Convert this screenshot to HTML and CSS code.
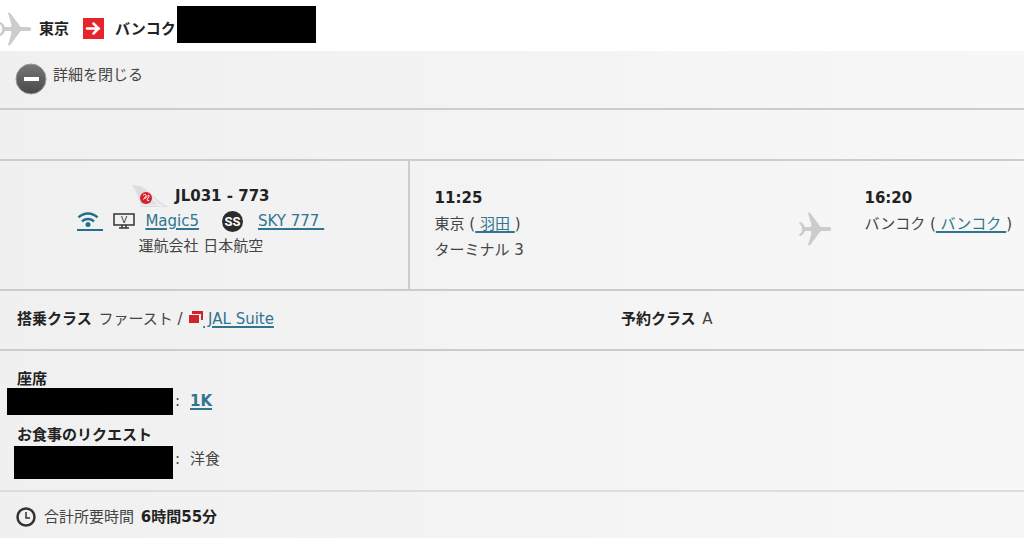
FILE: index.html
```html
<!DOCTYPE html>
<html lang="ja">
<head>
    <meta charset="UTF-8">
    <meta name="viewport" content="width=device-width, initial-scale=1.0">
    <title>東京 - バンコク</title>
    <link rel="stylesheet" href="styles.css">
</head>
<body>
    <svg class="defs" width="0" height="0">
        <symbol id="plane" viewBox="0 0 34 34">
            <path d="M10 1c1-1 2 0 3 1l8.500 11.500L23 15h8c3 0 3 4 0 4h-8l-1.500 1.500L13 32c-1 1-2 2-3 1l3.500-12-.5-2H7c-1 2-2 4-4.500 5-1 0-2-1-1-2 2-1 2.500-3 2.500-5s-.5-4-2.500-5c-1-1 0-2 1-2C5 11 6 13 7 15h6l.5-2z"/>
        </symbol>
    </svg>
    <header class="route">
        <svg class="plane"><use href="#plane"/></svg>
        <h1 class="city">東京</h1>
        <svg class="arrow" viewBox="0 0 21 21">
            <rect width="21" height="21" fill="#e6242b"/>
            <path d="M4 10.500h12M10.500 5.500l5 5-5 5" fill="none" stroke="#fff" stroke-width="2.500" stroke-linecap="round"/>
        </svg>
        <h1 class="city">バンコク</h1>
        <span class="mask mask-date"></span>
    </header>
    <main class="details">
        <div class="toggle">
            <button class="close" type="button">
                <svg class="minus" viewBox="0 0 32 32">
                    <defs>
                        <linearGradient id="shade" x2="0" y2="1">
                            <stop offset="0" stop-color="#777"/>
                            <stop offset="1" stop-color="#484848"/>
                        </linearGradient>
                    </defs>
                    <circle cx="16" cy="16" r="15" fill="url(#shade)" stroke="#999"/>
                    <rect x="9" y="14" width="15" height="4" fill="#fff"/>
                </svg>
                <span>詳細を閉じる</span>
            </button>
        </div>
        <div class="blank"></div>
        <section class="flight">
            <div class="carrier">
                <div class="number">
                    <svg class="tail" viewBox="0 0 36 23">
                        <path d="M0 0l8 1c8 3 15 14 28 21H9C7 13 4 5 0 0z" fill="#dcdce3"/>
                        <path d="M18 10l12 12M21 14l6 8M8 20h23" stroke="#f5f5f8" fill="none"/>
                        <circle cx="14" cy="13" r="6" fill="#d8202a"/>
                        <path d="M11 10.500c1.500-2 4-1 2.500 1l-2 3M12.500 14l3.500-3.500c1.500-1 1.500.5 0 2.500s-1 3 1 2.500" fill="none" stroke="#fff"/>
                    </svg>
                    <strong>JL031 - 773</strong>
                </div>
                <div class="equipment">
                    <a class="wifi" href="#" aria-label="Wi-Fi">
                        <svg viewBox="0 0 22 16">
                            <path d="M1.500 5.500c5-5.500 14-5.500 19 0M5 9.500c3-3.500 9-3.500 12 0" fill="none" stroke="#24708c" stroke-width="2.500"/>
                            <circle cx="11" cy="12.500" r="2.500" fill="#24708c"/>
                        </svg>
                    </a>
                    <svg class="monitor" viewBox="0 0 22 18">
                        <path d="M1 2h20v11H1zM6 16h10M9 13v3M13 13v3" fill="none" stroke="#333" stroke-width="1.500"/>
                        <text x="11" y="11">V</text>
                    </svg>
                    <a href="#">Magic5</a>
                    <span class="seat-type">SS</span>
                    <a href="#">SKY 777&nbsp;</a>
                </div>
                <p>運航会社 日本航空</p>
            </div>
            <div class="journey">
                <div class="stop departure">
                    <strong>11:25</strong>
                    <p>東京 (<a href="#">&nbsp;羽田&nbsp;</a>)</p>
                    <p>ターミナル 3</p>
                </div>
                <svg class="plane"><use href="#plane"/></svg>
                <div class="stop">
                    <strong>16:20</strong>
                    <p>バンコク (<a href="#">&nbsp;バンコク&nbsp;</a>)</p>
                </div>
            </div>
        </section>
        <section class="cabin">
            <p><strong>搭乗クラス</strong> ファースト /
                <svg class="window" viewBox="0 0 14 13"><path d="M3 0h11v9h-2V3H3z M0 4h10v8H0z" fill="#d2232a"/></svg><a href="#">&nbsp;JAL Suite</a></p>
            <p><strong>予約クラス</strong> A</p>
        </section>
        <section class="requests">
            <h2>座席</h2>
            <div class="request">
                <span class="mask mask-seat"></span><span class="colon">:</span><a class="seat" href="#">1K</a>
            </div>
            <h2>お食事のリクエスト</h2>
            <div class="request meal">
                <span class="mask mask-meal"></span><span class="colon">:</span><span>洋食</span>
            </div>
        </section>
        <footer class="total">
            <svg class="clock" viewBox="0 0 20 20">
                <circle cx="10" cy="10" r="8.500" fill="none" stroke="#333" stroke-width="2.500"/>
                <path d="M10 5v6h4" fill="none" stroke="#333" stroke-width="1.500"/>
            </svg>
            <p>合計所要時間 <strong>6時間55分</strong></p>
        </footer>
    </main>
</body>
</html>
```
FILE: styles.css
```css
* {
    box-sizing: border-box;
    margin: 0;
    padding: 0;
}

body {
    background: #fff;
    color: #444;
    font-family: "DejaVu Sans", "Noto Sans CJK JP", sans-serif;
    font-size: 15px;
    line-height: 26px;
}

h1, h2, button {
    font-family: inherit;
    font-size: 15px;
}

strong, h1, h2 {
    color: #222;
    font-weight: bold;
}

a {
    color: #2f7590;
    text-decoration-thickness: 2px;
    text-underline-offset: 2px;
}

.defs {
    display: block;
}

.mask {
    background: #000;
}

.plane {
    flex: none;
    width: 34px;
    height: 34px;
    fill: #ccc;
}

.route {
    display: flex;
    align-items: center;
    height: 51px;
    padding-top: 6px;
}

.route .plane {
    margin: 0 7px 0 -2px;
}

.arrow {
    width: 21px;
    height: 21px;
    margin: 0 11px 0 14px;
}

.mask-date {
    width: 139px;
    height: 37px;
    margin: 0 0 8px 1px;
}

.details {
    background: linear-gradient(to right, #f0f0f0, #f7f7f7);
}

.toggle {
    height: 59px;
    padding: 12px 15px;
    border-bottom: 2px solid #ccc;
}

.close {
    display: flex;
    gap: 6px;
    border: none;
    background: none;
    color: #444;
    line-height: 24px;
    cursor: pointer;
}

.minus {
    width: 32px;
    height: 32px;
}

.blank {
    height: 51px;
    border-bottom: 2px solid #ccc;
}

.flight {
    display: flex;
    height: 130px;
    border-bottom: 2px solid #ccc;
}

.carrier {
    display: flex;
    flex-direction: column;
    align-items: center;
    width: 40%;
    padding: 22px 6px 0 0;
    border-right: 2px solid #ccc;
}

.number, .equipment {
    display: flex;
    align-items: center;
}

.number {
    gap: 7px;
}

.tail {
    width: 36px;
    height: 23px;
}

.equipment {
    gap: 10px;
    height: 24px;
}

.wifi {
    display: flex;
    width: 26px;
    height: 19px;
    border-bottom: 2px solid #24708c;
}

.wifi svg {
    width: 22px;
    height: 16px;
}

.monitor {
    width: 22px;
    height: 18px;
}

.monitor text {
    fill: #333;
    font-size: 9px;
    text-anchor: middle;
}

.seat-type {
    width: 21px;
    height: 21px;
    margin: 0 5px 0 13px;
    border-radius: 50%;
    background: #2b2b2b;
    color: #fff;
    font: bold 13px/21px Roboto, sans-serif;
    text-align: center;
}

.journey {
    display: flex;
    flex: 1;
    padding: 24px 12px 0 25px;
    white-space: nowrap;
}

.departure {
    flex: 1;
}

.journey .plane {
    margin: 27px 32px 0 0;
}

.cabin {
    display: grid;
    grid-template-columns: 61% 39%;
    height: 60px;
    padding: 15px 17px;
    border-bottom: 2px solid #ccc;
}

.cabin strong, .total strong {
    margin: 0 2px;
}

.cabin strong {
    margin-left: 0;
}

.window {
    width: 14px;
    height: 13px;
    margin-left: 2px;
}

.requests {
    height: 141px;
    padding: 17px 7px 0;
    border-bottom: 2px solid #ddd;
}

.requests h2 {
    height: 20px;
    padding-left: 10px;
    line-height: 22px;
}

.request {
    display: flex;
    height: 36px;
}

.mask-seat {
    width: 166px;
    height: 27px;
}

.mask-meal {
    width: 159px;
    height: 33px;
}

.meal {
    padding: 2px 0 0 7px;
}

.colon {
    width: 17px;
    padding-left: 2px;
}

.seat {
    font-weight: bold;
}

.total {
    display: flex;
    align-items: center;
    gap: 8px;
    height: 46px;
    padding: 4px 16px 0;
}

.clock {
    width: 20px;
    height: 20px;
}
```
